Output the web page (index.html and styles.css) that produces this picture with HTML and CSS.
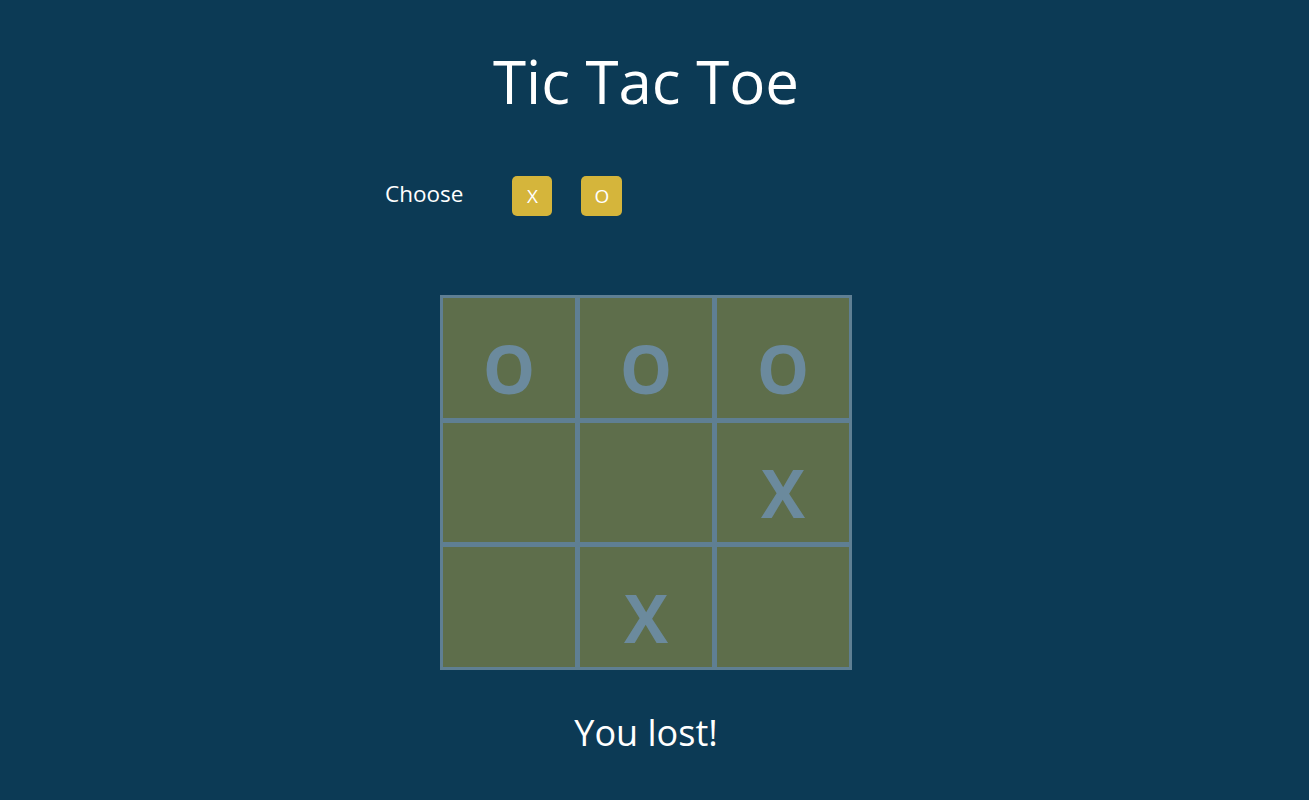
FILE: index.html
```html
<!DOCTYPE html>
<html>
<head>
<meta charset="utf-8">
<link rel="stylesheet" href="styles.css">
<title>Tic Tac Toe</title>
</head>
<body>
<div class="page">
  <h1 class="title">Tic Tac Toe</h1>
  <div class="choose-wrap">
    <div class="choose-row">
      <span class="choose-label">Choose</span>
      <button class="pick pick-x">X</button>
      <button class="pick pick-o">O</button>
    </div>
  </div>
  <div class="board">
    <div class="cell">O</div>
    <div class="cell">O</div>
    <div class="cell">O</div>
    <div class="cell"></div>
    <div class="cell"></div>
    <div class="cell">X</div>
    <div class="cell"></div>
    <div class="cell">X</div>
    <div class="cell"></div>
  </div>
  <div class="result">You lost!</div>
</div>
</body>
</html>
```

FILE: styles.css
```css
html, body {
  margin: 0;
  padding: 0;
  background: #0c3a55;
  height: 100%;
}
body {
  font-family: "Open Sans", "DejaVu Sans", sans-serif;
  color: #ffffff;
  overflow: hidden;
}
.page {
  width: 1292px;
  display: flex;
  flex-direction: column;
  align-items: center;
}
.title {
  margin: 36px 0 0 0;
  font-size: 60px;
  font-weight: normal;
  line-height: 90px;
}
.choose-wrap {
  width: 522px;
  margin-top: 50px;
}
.choose-row {
  display: flex;
  align-items: center;
}
.choose-label {
  font-size: 22.5px;
  margin-right: 49px;
  margin-top: -6px;
}
.pick {
  background: #d5b53b;
  border: none;
  border-radius: 5px;
  color: #ffffff;
  font-family: inherit;
  font-size: 19px;
  height: 40px;
  padding: 0;
}
.pick-x { width: 40px; margin-right: 29px; }
.pick-o { width: 41px; }
.board {
  margin-top: 79px;
  width: 406px;
  height: 369px;
  border: 3px solid #5f7f93;
  background: #5f7f93;
  display: grid;
  grid-template-columns: repeat(3, 1fr);
  grid-template-rows: repeat(3, 1fr);
  gap: 5px;
}
.cell {
  background: #5e6e4b;
  color: #6b8a9d;
  font-size: 66px;
  font-weight: bold;
  display: flex;
  align-items: flex-end;
  justify-content: center;
  line-height: 1;
  padding-bottom: 17px;
}
.result {
  margin-top: 38px;
  font-size: 36px;
}
```
